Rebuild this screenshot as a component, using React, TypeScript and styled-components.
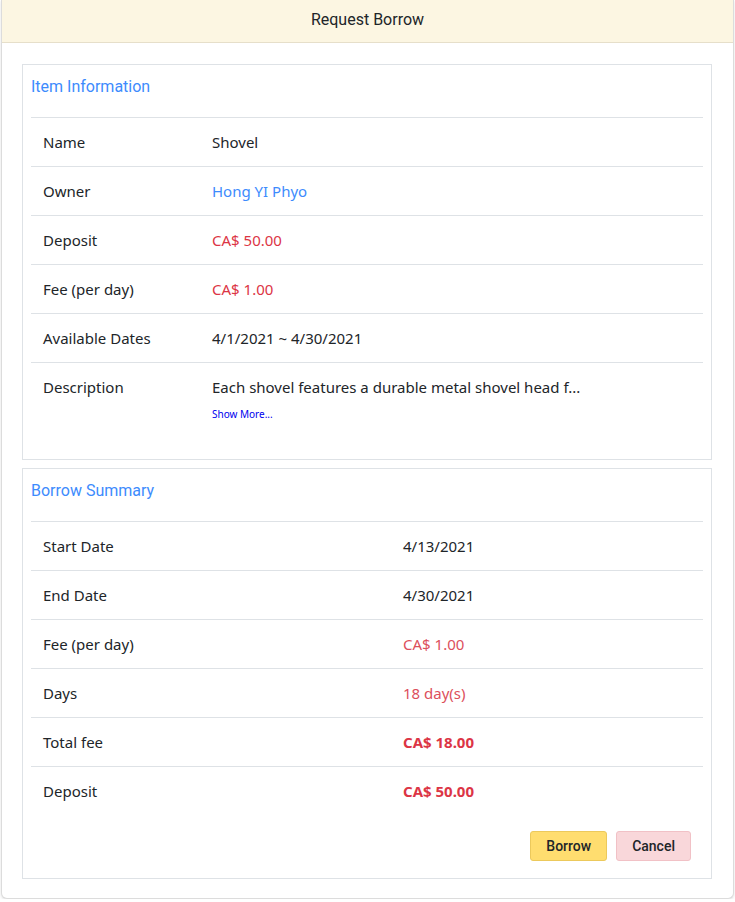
import styled, { createGlobalStyle } from 'styled-components';

const GlobalStyle = createGlobalStyle`
  * {
    box-sizing: border-box;
  }
  body {
    margin: 0;
    background: #ffffff;
    font-family: 'Noto Sans', 'Open Sans', sans-serif;
    color: #212529;
  }
`;

type Tone = 'default' | 'link' | 'danger' | 'soft' | 'strong';

const itemRows: { label: string; value: string; tone: Tone }[] = [
  { label: 'Name', value: 'Shovel', tone: 'default' },
  { label: 'Owner', value: 'Hong YI Phyo', tone: 'link' },
  { label: 'Deposit', value: 'CA$ 50.00', tone: 'danger' },
  { label: 'Fee (per day)', value: 'CA$ 1.00', tone: 'danger' },
  { label: 'Available Dates', value: '4/1/2021 ~ 4/30/2021', tone: 'default' },
];

const summaryRows: { label: string; value: string; tone: Tone }[] = [
  { label: 'Start Date', value: '4/13/2021', tone: 'default' },
  { label: 'End Date', value: '4/30/2021', tone: 'default' },
  { label: 'Fee (per day)', value: 'CA$ 1.00', tone: 'soft' },
  { label: 'Days', value: '18 day(s)', tone: 'soft' },
  { label: 'Total fee', value: 'CA$ 18.00', tone: 'strong' },
  { label: 'Deposit', value: 'CA$ 50.00', tone: 'strong' },
];

const App = () => {
  return (
    <>
      <GlobalStyle />
      <Card>
        <Header>Request Borrow</Header>
        <Body>
          <Panel>
            <PanelTitle>Item Information</PanelTitle>
            <Table>
              <tbody>
                {itemRows.map((row) => (
                  <Row key={row.label}>
                    <LabelCell width={169}>{row.label}</LabelCell>
                    <ValueCell tone={row.tone}>{row.value}</ValueCell>
                  </Row>
                ))}
                <Row>
                  <LabelCell width={169}>Description</LabelCell>
                  <ValueCell tone="default">
                    Each shovel features a durable metal shovel head f...
                    <ShowMore>Show More...</ShowMore>
                  </ValueCell>
                </Row>
              </tbody>
            </Table>
          </Panel>

          <Panel>
            <PanelTitle>Borrow Summary</PanelTitle>
            <Table>
              <tbody>
                {summaryRows.map((row) => (
                  <Row key={row.label}>
                    <LabelCell width={360}>{row.label}</LabelCell>
                    <ValueCell tone={row.tone}>{row.value}</ValueCell>
                  </Row>
                ))}
              </tbody>
            </Table>
            <Actions>
              <Button variant="warning">Borrow</Button>
              <Button variant="danger">Cancel</Button>
            </Actions>
          </Panel>
        </Body>
      </Card>
    </>
  );
};

export default App;

const Card = styled.div`
  margin: 0 1px;
  width: 733px;
  height: 899px;
  border: 1px solid #dcdcdc;
  border-top: none;
  border-radius: 0 0 6px 6px;
  box-shadow: 0 1px 3px rgba(0, 0, 0, 0.12);
  background: #fff;
  display: flex;
  flex-direction: column;
`;

const Header = styled.div`
  height: 43px;
  padding-bottom: 4px;
  background: #fcf6e2;
  border-bottom: 1px solid #e6dfca;
  font-family: Roboto, sans-serif;
  font-size: 16px;
  color: #212529;
  display: flex;
  align-items: center;
  justify-content: center;
`;

const Body = styled.div`
  padding: 21px 21px 0 20px;
  display: flex;
  flex-direction: column;
  gap: 8px;
`;

const Panel = styled.div`
  border: 1px solid #dee2e6;
  padding: 8px 8px 17px 8px;
`;

const PanelTitle = styled.div`
  font-family: Roboto, sans-serif;
  font-size: 16px;
  color: #3d8bfd;
  height: 45px;
  padding-top: 4px;
  border-bottom: 1px solid #dee2e6;
`;

const Table = styled.table`
  width: 100%;
  border-collapse: collapse;
  font-size: 15px;
`;

const Row = styled.tr`
  & + & td {
    border-top: 1px solid #dee2e6;
  }
`;

const LabelCell = styled.td<{ width: number }>`
  width: ${(p) => p.width}px;
  padding: 13px 12px 12px 12px;
  vertical-align: top;
  line-height: 23px;
  color: #212529;
`;

const toneColor: Record<Tone, string> = {
  default: '#212529',
  link: '#3d8bfd',
  danger: '#dc3545',
  soft: '#dc4f5c',
  strong: '#dc3545',
};

const ValueCell = styled.td<{ tone: Tone }>`
  padding: 13px 12px 12px 12px;
  vertical-align: top;
  line-height: 23px;
  color: ${(p) => toneColor[p.tone]};
  font-weight: ${(p) => (p.tone === 'strong' ? 700 : 400)};
`;

const ShowMore = styled.div`
  font-size: 10px;
  line-height: 14px;
  color: #0000ee;
  margin-top: 8px;
  padding-bottom: 9px;
`;

const Actions = styled.div`
  display: flex;
  justify-content: flex-end;
  gap: 9px;
  padding: 0 12px 0 0;
  margin-top: 16px;
`;

const Button = styled.button<{ variant: 'warning' | 'danger' }>`
  height: 30px;
  padding: 0 15px;
  font-family: Roboto, sans-serif;
  font-size: 14px;
  font-weight: 500;
  color: #212529;
  border-radius: 3px;
  border: 1px solid ${(p) => (p.variant === 'warning' ? '#ecc95c' : '#f1c1c6')};
  background: ${(p) => (p.variant === 'warning' ? '#ffdd6f' : '#f9d7da')};
  cursor: pointer;
`;
